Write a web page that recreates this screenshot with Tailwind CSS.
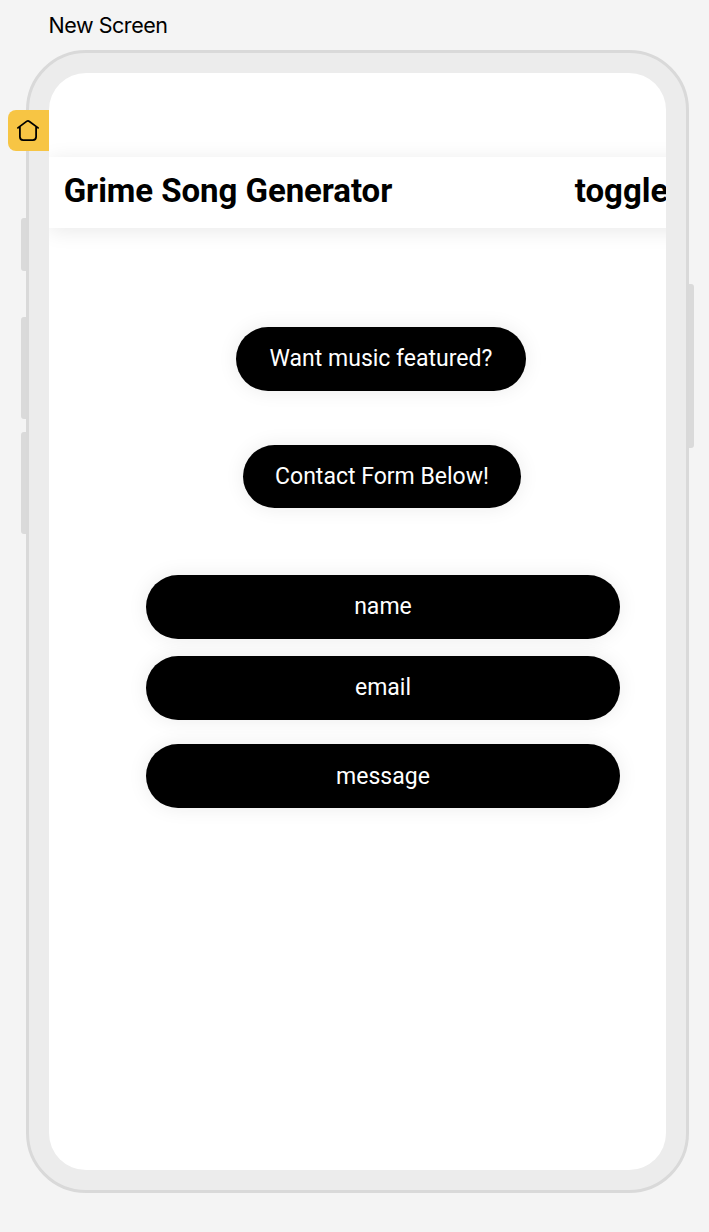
<!DOCTYPE html>
<html lang="en">
<head>
<meta charset="utf-8">
<title>New Screen</title>
<script src="https://cdn.jsdelivr.net/npm/@tailwindcss/browser@4"></script>
</head>
<body class="h-[1232px] w-[709px] overflow-hidden bg-[#f4f4f4] font-[Roboto,sans-serif]">
  <div class="h-[50px] pt-[9px] pl-[48.5px] font-[Inter,sans-serif] text-[21.5px] leading-8 text-black"><span class="tracking-[-0.45px]">New Screen</span></div>
  <main class="relative ml-[25.7px] h-[1143.4px] w-[663px] rounded-[60px] border-[3px] border-[#d9d9d9] bg-[#ececec] px-[20px] pt-[20px]">
    <!-- hardware buttons -->
    <div class="absolute top-[165px] -left-[8px] h-[53px] w-[5px] rounded-l-[3px] bg-[#dadada]"></div>
    <div class="absolute top-[264px] -left-[8px] h-[102px] w-[5px] rounded-l-[3px] bg-[#dadada]"></div>
    <div class="absolute top-[379px] -left-[8px] h-[102px] w-[5px] rounded-l-[3px] bg-[#dadada]"></div>
    <div class="absolute top-[231px] -right-[8px] h-[164px] w-[5px] rounded-r-[3px] bg-[#dadada]"></div>
    <!-- home tab -->
    <div class="absolute top-[56.7px] -left-[20.7px] flex h-[41px] w-[41px] items-center justify-center rounded-l-[8px] bg-[#f7c544] pr-[1px] pb-[1px]">
      <svg class="h-[24px] w-[24px]" viewBox="0 0 24 24" fill="none" stroke="#000" stroke-width="1.8" stroke-linecap="round" stroke-linejoin="round"><path d="M1.9 9.9 10.6 3.4Q12 2.4 13.4 3.4L22.1 9.9M3.9 8.7V18.8Q3.9 22.1 7.2 22.1H16.8Q20.1 22.1 20.1 18.8V8.7"/></svg>
    </div>
    <section class="h-[1097.3px] w-[617.2px] overflow-hidden rounded-[37px] bg-white pt-[84px]">
      <header class="flex h-[71px] w-[657px] items-center justify-between bg-white pr-[40px] pl-[15px] text-[33px] leading-10 font-bold whitespace-nowrap text-black shadow-[0_3px_20px_rgba(0,0,0,0.09)]">
        <h1 class="-mt-[3px] tracking-[-0.06px]">Grime Song Generator</h1>
        <span class="-mt-[3px] w-[91px]">toggle</span>
      </header>
      <div class="flex flex-col items-center pt-[98.5px] pl-[51.4px] text-[23px] text-white">
        <div class="mr-[4px] flex h-[64px] w-[290px] items-center justify-center rounded-full bg-black pt-[1px] shadow-[0_0_20px_rgba(0,0,0,0.08)]">Want music featured?</div>
        <div class="mt-[54.5px] mr-[2px] flex h-[62.5px] w-[278px] items-center justify-center rounded-full bg-black pt-[1px] shadow-[0_0_20px_rgba(0,0,0,0.08)]">Contact Form Below!</div>
        <div class="mt-[67.5px] flex h-[64px] w-[474px] items-center justify-center rounded-full bg-black shadow-[0_0_20px_rgba(0,0,0,0.08)]">name</div>
        <div class="mt-[16.7px] flex h-[64px] w-[474px] items-center justify-center rounded-full bg-black pt-[1px] shadow-[0_0_20px_rgba(0,0,0,0.08)]">email</div>
        <div class="mt-[24.7px] flex h-[64px] w-[474px] items-center justify-center rounded-full bg-black pt-[1px] shadow-[0_0_20px_rgba(0,0,0,0.08)]">message</div>
      </div>
    </section>
  </main>
</body>
</html>
